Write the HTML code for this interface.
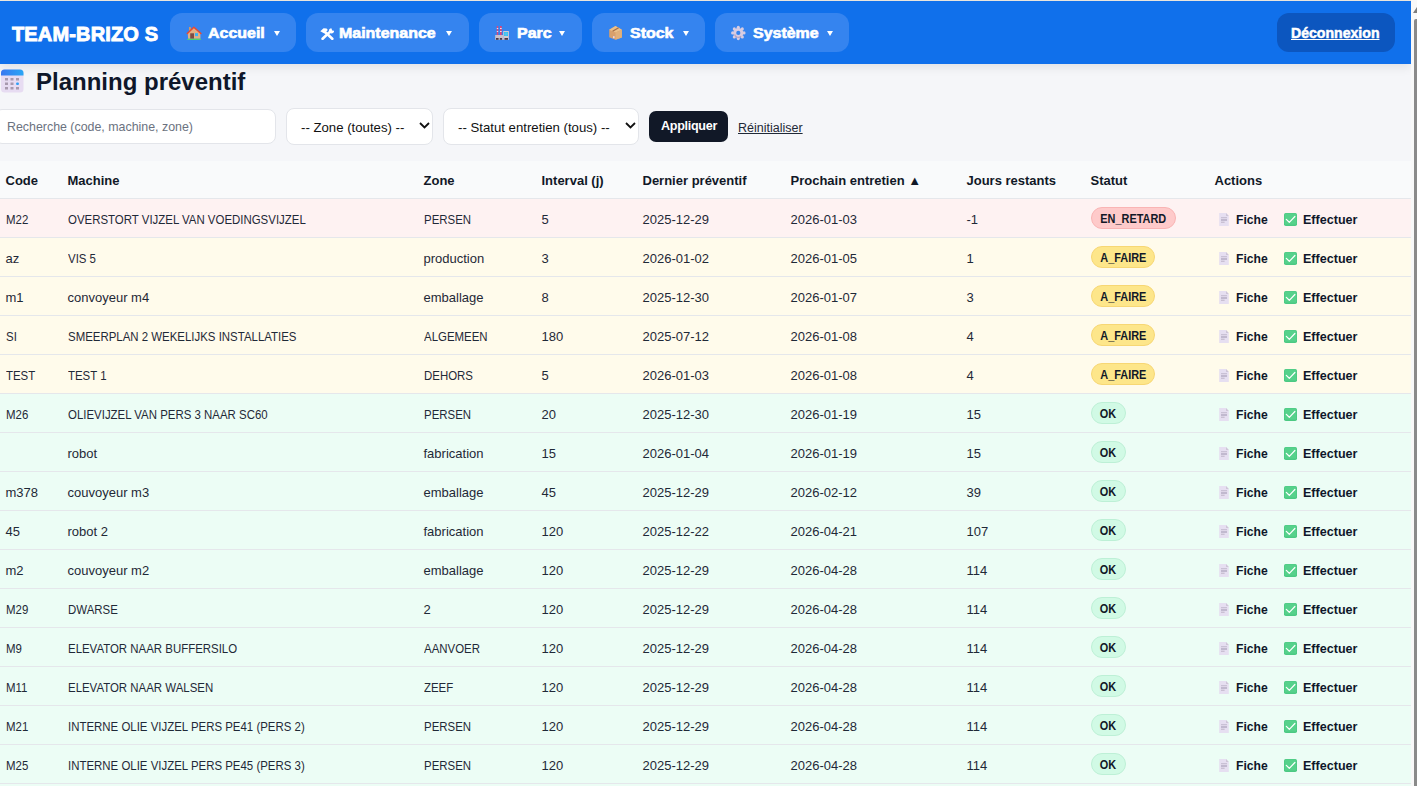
<!DOCTYPE html>
<html><head><meta charset="utf-8">
<style>
*{box-sizing:border-box;margin:0;padding:0}
html,body{width:1417px;height:786px;overflow:hidden}
body{background:#f5f6f9;font-family:"Liberation Sans",sans-serif;color:#111827;position:relative}
.abs{position:absolute}
.topline{position:absolute;left:0;top:0;width:1411px;height:1px;background:#eeeae2}
.nav{position:absolute;left:0;top:1px;width:1411px;height:63px;background:#1070eb;box-shadow:0 3px 10px rgba(0,0,0,.09)}
.brand{position:absolute;left:12px;top:24px;color:#fff;font-weight:bold;font-size:20px;line-height:20px;-webkit-text-stroke:0.9px #fff;letter-spacing:0.15px;white-space:nowrap}
.pill{position:absolute;top:13px;height:39px;border-radius:12px;background:#3584ef}
.ptxt{position:absolute;top:25px;line-height:16px;white-space:nowrap;color:#fff;font-weight:bold;font-size:14px;-webkit-text-stroke:0.6px #fff;letter-spacing:0px;transform:scaleX(1.14);transform-origin:0 0}
.car{position:absolute;top:31px;width:0;height:0;border-left:3px solid transparent;border-right:3px solid transparent;border-top:5px solid #fff}
.pico{position:absolute;top:26px}
.logout{position:absolute;left:1277px;top:13px;width:118px;height:39px;border-radius:12px;background:#0c56bf}
.logtxt{position:absolute;left:1291px;top:25px;line-height:16px;color:#fff;font-weight:bold;font-size:14.1px;text-decoration:underline;-webkit-text-stroke:0.5px #fff;white-space:nowrap}
.sb{position:absolute;left:1411px;top:0;width:6px;height:786px;background:#f8f8f8}
.sbthumb{position:absolute;left:1414px;top:19px;width:3px;height:768px;background:#8a8a8a;border-radius:2px 0 0 0}
.sbarrow{position:absolute;left:1413px;top:7px;width:0;height:0;border-left:4px solid transparent;border-right:4px solid transparent;border-bottom:6px solid #7d7d7d}
.h1{position:absolute;left:36px;top:68px;font-size:24px;line-height:28px;font-weight:bold;color:#0f172a;white-space:nowrap}
.cal{position:absolute;left:0;top:69px}
.search{position:absolute;left:-6px;top:109px;width:282px;height:35px;background:#fff;border:1px solid #e3e5ea;border-radius:8px}
.ph{position:absolute;left:7px;top:120px;font-size:12.4px;color:#6b7280;line-height:14px;white-space:nowrap}
.sel{position:absolute;top:108px;height:37px;background:#fff;border:1px solid #e3e5ea;border-radius:8px}
.seltxt{position:absolute;top:120px;line-height:15px;white-space:nowrap;font-size:13.2px;color:#111}
.chev{position:absolute;top:122px}
.btn{position:absolute;left:649px;top:111px;width:79px;height:31px;background:#111827;border-radius:7px}
.btntxt{position:absolute;left:661px;top:119px;line-height:15px;color:#fff;font-weight:bold;font-size:12.6px;letter-spacing:-0.3px;white-space:nowrap}
.reset{position:absolute;left:738px;top:121px;font-size:12.5px;line-height:15px;color:#1f2937;text-decoration:underline;white-space:nowrap}
table{position:absolute;left:0;top:161px;width:1411px;border-collapse:collapse;font-size:13px;table-layout:fixed}
th{height:37px;background:#f9fafb;text-align:left;font-weight:bold;padding:2px 0 0 5.5px;border-bottom:1px solid #e5e7eb;white-space:nowrap;color:#111827}
td{height:39px;padding:3px 0 0 5.5px;border-bottom:1px solid #e5e7eb;white-space:nowrap;color:#1f2937}
tr.r td{background:#fef2f2}
tr.y td{background:#fffbeb}
tr.g td{background:#ecfdf5}
.uc{display:inline-block;transform:scaleX(.88);transform-origin:0 0}
.badge{display:inline-block;height:22px;line-height:20px;border-radius:11px;font-size:12px;font-weight:bold;border:1px solid;color:#111827;vertical-align:middle;position:relative;top:-1px;margin-left:0.5px;text-align:center;white-space:nowrap}
.bt{display:inline-block;transform:scaleX(.91);transform-origin:50% 50%;position:relative;top:0.5px}
.b-r{width:84.5px}.b-y{width:64px}.b-g{width:34.5px}
.b-r{background:#fecaca;border-color:#f9b4b4}
.b-y{background:#fde68a;border-color:#f7d774}
.b-g{background:#d1fae5;border-color:#bdf0d6}
.act{padding:0}
.aw{position:relative;height:38px;font-weight:bold;font-size:13.5px;color:#0f172a}
.aw svg{position:absolute}
.aw .doc{left:10px;top:14px}
.aw .chk{left:75px;top:14px}
.aw .f,.aw .e{position:absolute;top:13.5px;line-height:16px;transform-origin:0 0;white-space:nowrap}
.aw .f{left:27.4px;transform:scaleX(.9)}
.aw .e{left:94px;transform:scaleX(.93)}

</style></head><body>
<div class="topline"></div>
<div class="nav"></div>
<div class="brand">TEAM-BRIZO S</div>

<div class="pill" style="left:170px;width:126px"></div>
<svg class="abs" style="left:184px;top:24px" width="20" height="18" viewBox="0 0 20 18"><rect x="5.1" y="3" width="1.7" height="4" fill="#dc9a5c"/><path d="M3.8 9.2L9.85 3.6L16.4 9.2V14.8H4.1z" fill="#e2b084"/><path d="M3.3 9.5L9.85 3.3L16.9 9.5" stroke="#e9482f" stroke-width="1.5" fill="none" stroke-linecap="round" stroke-linejoin="round"/><rect x="6.2" y="9.3" width="3.8" height="5.4" fill="#7d4c45"/><rect x="11" y="9.1" width="3" height="3" fill="#3bb4f4"/><rect x="3.2" y="14.7" width="13.8" height="1.3" rx="0.6" fill="#4fd36b"/></svg>
<div class="ptxt" style="left:208px">Accueil</div>
<div class="car" style="left:274px"></div>

<div class="pill" style="left:306px;width:163px"></div>
<svg class="abs" style="left:320px;top:28px" width="14" height="12" viewBox="0 0 14 12"><path d="M5 4L12.3 10.8" stroke="#fff" stroke-width="2.6" stroke-linecap="round"/><path d="M10.4 3.4L2.6 10.8" stroke="#fff" stroke-width="2.6" stroke-linecap="round"/><path d="M0.3 3.3L3.6 0.2L6.6 0.4L7.8 2.1L4.4 5.6z" fill="#fff"/><circle cx="11.5" cy="2.8" r="2.6" fill="#fff"/><path d="M11.3 -0.2L14.2 -0.2L14.2 2.9L12.2 2.6z" fill="#3584ef"/></svg>
<div class="ptxt" style="left:339px">Maintenance</div>
<div class="car" style="left:446px"></div>

<div class="pill" style="left:479px;width:103px"></div>
<svg class="abs" style="left:492px;top:24px" width="20" height="18" viewBox="0 0 20 18"><rect x="4.8" y="2" width="1.4" height="9" fill="#e0447a"/><rect x="8" y="2" width="1.7" height="9" fill="#e0447a"/><rect x="4.8" y="4" width="1.4" height="1" fill="#dfe3ea"/><rect x="8" y="4" width="1.7" height="1" fill="#dfe3ea"/><rect x="4.8" y="7" width="1.4" height="1" fill="#dfe3ea"/><rect x="8" y="7" width="1.7" height="1" fill="#dfe3ea"/><rect x="3.2" y="11" width="8" height="4.8" fill="#c9c0cb"/><rect x="11.2" y="7" width="5.7" height="8.8" fill="#d2cad3"/><rect x="12" y="8" width="4" height="4" fill="#35c0f0"/><path d="M14 8v4M12 10h4" stroke="#7fd4f4" stroke-width="0.4"/><rect x="4" y="14" width="2.6" height="1.8" fill="#4a3a48"/><rect x="7.8" y="14" width="2.3" height="1.8" fill="#4a3a48"/><rect x="12.5" y="14" width="3.5" height="1.8" fill="#4a3a48"/></svg>
<div class="ptxt" style="left:517px">Parc</div>
<div class="car" style="left:559px"></div>

<div class="pill" style="left:592px;width:113px"></div>
<svg class="abs" style="left:606px;top:24px" width="20" height="18" viewBox="0 0 20 18"><path d="M9.5 2L15.9 5.8V13.4L9.5 15.8L3.2 13.2V5.8z" fill="#d9a06c"/><path d="M3.2 5.8L9.5 2L15.9 5.8L9.5 8.4z" fill="#ebc08a"/><path d="M9.5 8.4L15.9 5.8V13.4L9.5 15.8z" fill="#e2b07a"/><path d="M6.6 7.2L12.6 3.8" stroke="#a46c46" stroke-width="1.3"/><rect x="7" y="12.2" width="1.6" height="2" fill="#e6d6ea"/></svg>
<div class="ptxt" style="left:630px">Stock</div>
<div class="car" style="left:683px"></div>

<div class="pill" style="left:715px;width:134px"></div>
<svg class="abs" style="left:728px;top:24px" width="20" height="18" viewBox="0 0 20 18"><g fill="#d8cce2"><circle cx="10.3" cy="8.9" r="5.0"/><circle cx="10.3" cy="3.2" r="1.55"/><circle cx="10.3" cy="14.6" r="1.55"/><circle cx="4.6" cy="8.9" r="1.55"/><circle cx="16.0" cy="8.9" r="1.55"/><circle cx="6.3" cy="4.9" r="1.55"/><circle cx="14.3" cy="4.9" r="1.55"/><circle cx="6.3" cy="12.9" r="1.55"/><circle cx="14.3" cy="12.9" r="1.55"/></g><path d="M6.6 10.5a3.8 3.8 0 0 0 6.5 1.6" stroke="#b6a4c2" stroke-width="1.2" fill="none"/><circle cx="10.3" cy="8.9" r="2.1" fill="#3584ef"/></svg>
<div class="ptxt" style="left:753px">Système</div>
<div class="car" style="left:827px"></div>

<div class="logout"></div>
<div class="logtxt">Déconnexion</div>

<svg class="cal" width="24" height="24" viewBox="0 0 24 24"><defs><linearGradient id="cg" x1="0" x2="1"><stop offset="0" stop-color="#3a78f0"/><stop offset="1" stop-color="#2aa6f5"/></linearGradient></defs><rect x="1" y="0.5" width="22.5" height="23" rx="3.5" fill="#e7dcf2"/><path d="M1 4a3.5 3.5 0 0 1 3.5-3.5h15.5a3.5 3.5 0 0 1 3.5 3.5v2.5h-22.5z" fill="url(#cg)"/><g fill="#a89aae"><rect x="5" y="9" width="3" height="2.5"/><rect x="10.5" y="9" width="3" height="2.5"/><rect x="16" y="9" width="3" height="2.5"/><rect x="5" y="13.5" width="3" height="2.5"/><rect x="10.5" y="13.5" width="3" height="2.5"/><rect x="5" y="18" width="3" height="2.5"/><rect x="10.5" y="18" width="3" height="2.5"/><rect x="16" y="18" width="3" height="2.5"/></g><rect x="16" y="13.5" width="3" height="2.5" rx="1.2" fill="#2f9ff5"/></svg>
<div class="h1">Planning préventif</div>

<div class="search"></div>
<div class="ph">Recherche (code, machine, zone)</div>
<div class="sel" style="left:286px;width:147px"></div>
<div class="seltxt" style="left:301px">-- Zone (toutes) --</div>
<svg class="chev" style="left:419px" width="11" height="7" viewBox="0 0 11 7"><path d="M1 1l4.5 4.5l4.5-4.5" stroke="#111" stroke-width="1.8" fill="none"/></svg>
<div class="sel" style="left:443px;width:196px"></div>
<div class="seltxt" style="left:458px">-- Statut entretien (tous) --</div>
<svg class="chev" style="left:625px" width="11" height="7" viewBox="0 0 11 7"><path d="M1 1l4.5 4.5l4.5-4.5" stroke="#111" stroke-width="1.8" fill="none"/></svg>
<div class="btn"></div>
<div class="btntxt">Appliquer</div>
<div class="reset">Réinitialiser</div>

<table>
<colgroup><col style="width:62px"><col style="width:356px"><col style="width:118px"><col style="width:101px"><col style="width:148px"><col style="width:176px"><col style="width:124px"><col style="width:124px"><col style="width:202px"></colgroup>
<thead><tr><th>Code</th><th>Machine</th><th>Zone</th><th>Interval (j)</th><th>Dernier préventif</th><th>Prochain entretien ▲</th><th>Jours restants</th><th>Statut</th><th>Actions</th></tr></thead>
<tbody>
<tr class="r"><td><span class="uc">M22</span></td><td><span class="uc">OVERSTORT VIJZEL VAN VOEDINGSVIJZEL</span></td><td><span class="uc">PERSEN</span></td><td>5</td><td>2025-12-29</td><td>2026-01-03</td><td>-1</td><td><span class="badge b-r"><span class="bt">EN_RETARD</span></span></td><td class="act"><div class="aw"><svg class="doc" width="10" height="13" viewBox="0 0 10 13"><path d="M0.2 0h6.8l2.8 3v10h-9.6z" fill="#e6dff1"/><path d="M7 0l2.8 3h-2.8z" fill="#cfc6d8"/><rect x="2" y="4.3" width="6" height="0.9" fill="#bdb4c9"/><rect x="2" y="6.2" width="6" height="1.6" fill="#b9b0c6"/><rect x="2" y="8.6" width="3.6" height="1.4" fill="#c9c0d3"/></svg><span class="f">Fiche</span><svg class="chk" width="13" height="13" viewBox="0 0 13 13"><rect x="0" y="0" width="13" height="13" rx="1.8" fill="#4cc983"/><rect x="0.8" y="0.6" width="11.4" height="11" rx="1.2" fill="#56d18b"/><path d="M2.3 6.4L5.3 9.3L10.9 3.5" stroke="#fff" stroke-width="1.2" fill="none" stroke-linecap="round" stroke-linejoin="round"/></svg><span class="e">Effectuer</span></div></td></tr><tr class="y"><td>az</td><td><span class="uc">VIS 5</span></td><td>production</td><td>3</td><td>2026-01-02</td><td>2026-01-05</td><td>1</td><td><span class="badge b-y"><span class="bt">A_FAIRE</span></span></td><td class="act"><div class="aw"><svg class="doc" width="10" height="13" viewBox="0 0 10 13"><path d="M0.2 0h6.8l2.8 3v10h-9.6z" fill="#e6dff1"/><path d="M7 0l2.8 3h-2.8z" fill="#cfc6d8"/><rect x="2" y="4.3" width="6" height="0.9" fill="#bdb4c9"/><rect x="2" y="6.2" width="6" height="1.6" fill="#b9b0c6"/><rect x="2" y="8.6" width="3.6" height="1.4" fill="#c9c0d3"/></svg><span class="f">Fiche</span><svg class="chk" width="13" height="13" viewBox="0 0 13 13"><rect x="0" y="0" width="13" height="13" rx="1.8" fill="#4cc983"/><rect x="0.8" y="0.6" width="11.4" height="11" rx="1.2" fill="#56d18b"/><path d="M2.3 6.4L5.3 9.3L10.9 3.5" stroke="#fff" stroke-width="1.2" fill="none" stroke-linecap="round" stroke-linejoin="round"/></svg><span class="e">Effectuer</span></div></td></tr><tr class="y"><td>m1</td><td>convoyeur m4</td><td>emballage</td><td>8</td><td>2025-12-30</td><td>2026-01-07</td><td>3</td><td><span class="badge b-y"><span class="bt">A_FAIRE</span></span></td><td class="act"><div class="aw"><svg class="doc" width="10" height="13" viewBox="0 0 10 13"><path d="M0.2 0h6.8l2.8 3v10h-9.6z" fill="#e6dff1"/><path d="M7 0l2.8 3h-2.8z" fill="#cfc6d8"/><rect x="2" y="4.3" width="6" height="0.9" fill="#bdb4c9"/><rect x="2" y="6.2" width="6" height="1.6" fill="#b9b0c6"/><rect x="2" y="8.6" width="3.6" height="1.4" fill="#c9c0d3"/></svg><span class="f">Fiche</span><svg class="chk" width="13" height="13" viewBox="0 0 13 13"><rect x="0" y="0" width="13" height="13" rx="1.8" fill="#4cc983"/><rect x="0.8" y="0.6" width="11.4" height="11" rx="1.2" fill="#56d18b"/><path d="M2.3 6.4L5.3 9.3L10.9 3.5" stroke="#fff" stroke-width="1.2" fill="none" stroke-linecap="round" stroke-linejoin="round"/></svg><span class="e">Effectuer</span></div></td></tr><tr class="y"><td><span class="uc">SI</span></td><td><span class="uc">SMEERPLAN 2 WEKELIJKS INSTALLATIES</span></td><td><span class="uc">ALGEMEEN</span></td><td>180</td><td>2025-07-12</td><td>2026-01-08</td><td>4</td><td><span class="badge b-y"><span class="bt">A_FAIRE</span></span></td><td class="act"><div class="aw"><svg class="doc" width="10" height="13" viewBox="0 0 10 13"><path d="M0.2 0h6.8l2.8 3v10h-9.6z" fill="#e6dff1"/><path d="M7 0l2.8 3h-2.8z" fill="#cfc6d8"/><rect x="2" y="4.3" width="6" height="0.9" fill="#bdb4c9"/><rect x="2" y="6.2" width="6" height="1.6" fill="#b9b0c6"/><rect x="2" y="8.6" width="3.6" height="1.4" fill="#c9c0d3"/></svg><span class="f">Fiche</span><svg class="chk" width="13" height="13" viewBox="0 0 13 13"><rect x="0" y="0" width="13" height="13" rx="1.8" fill="#4cc983"/><rect x="0.8" y="0.6" width="11.4" height="11" rx="1.2" fill="#56d18b"/><path d="M2.3 6.4L5.3 9.3L10.9 3.5" stroke="#fff" stroke-width="1.2" fill="none" stroke-linecap="round" stroke-linejoin="round"/></svg><span class="e">Effectuer</span></div></td></tr><tr class="y"><td><span class="uc">TEST</span></td><td><span class="uc">TEST 1</span></td><td><span class="uc">DEHORS</span></td><td>5</td><td>2026-01-03</td><td>2026-01-08</td><td>4</td><td><span class="badge b-y"><span class="bt">A_FAIRE</span></span></td><td class="act"><div class="aw"><svg class="doc" width="10" height="13" viewBox="0 0 10 13"><path d="M0.2 0h6.8l2.8 3v10h-9.6z" fill="#e6dff1"/><path d="M7 0l2.8 3h-2.8z" fill="#cfc6d8"/><rect x="2" y="4.3" width="6" height="0.9" fill="#bdb4c9"/><rect x="2" y="6.2" width="6" height="1.6" fill="#b9b0c6"/><rect x="2" y="8.6" width="3.6" height="1.4" fill="#c9c0d3"/></svg><span class="f">Fiche</span><svg class="chk" width="13" height="13" viewBox="0 0 13 13"><rect x="0" y="0" width="13" height="13" rx="1.8" fill="#4cc983"/><rect x="0.8" y="0.6" width="11.4" height="11" rx="1.2" fill="#56d18b"/><path d="M2.3 6.4L5.3 9.3L10.9 3.5" stroke="#fff" stroke-width="1.2" fill="none" stroke-linecap="round" stroke-linejoin="round"/></svg><span class="e">Effectuer</span></div></td></tr><tr class="g"><td><span class="uc">M26</span></td><td><span class="uc">OLIEVIJZEL VAN PERS 3 NAAR SC60</span></td><td><span class="uc">PERSEN</span></td><td>20</td><td>2025-12-30</td><td>2026-01-19</td><td>15</td><td><span class="badge b-g"><span class="bt">OK</span></span></td><td class="act"><div class="aw"><svg class="doc" width="10" height="13" viewBox="0 0 10 13"><path d="M0.2 0h6.8l2.8 3v10h-9.6z" fill="#e6dff1"/><path d="M7 0l2.8 3h-2.8z" fill="#cfc6d8"/><rect x="2" y="4.3" width="6" height="0.9" fill="#bdb4c9"/><rect x="2" y="6.2" width="6" height="1.6" fill="#b9b0c6"/><rect x="2" y="8.6" width="3.6" height="1.4" fill="#c9c0d3"/></svg><span class="f">Fiche</span><svg class="chk" width="13" height="13" viewBox="0 0 13 13"><rect x="0" y="0" width="13" height="13" rx="1.8" fill="#4cc983"/><rect x="0.8" y="0.6" width="11.4" height="11" rx="1.2" fill="#56d18b"/><path d="M2.3 6.4L5.3 9.3L10.9 3.5" stroke="#fff" stroke-width="1.2" fill="none" stroke-linecap="round" stroke-linejoin="round"/></svg><span class="e">Effectuer</span></div></td></tr><tr class="g"><td></td><td>robot</td><td>fabrication</td><td>15</td><td>2026-01-04</td><td>2026-01-19</td><td>15</td><td><span class="badge b-g"><span class="bt">OK</span></span></td><td class="act"><div class="aw"><svg class="doc" width="10" height="13" viewBox="0 0 10 13"><path d="M0.2 0h6.8l2.8 3v10h-9.6z" fill="#e6dff1"/><path d="M7 0l2.8 3h-2.8z" fill="#cfc6d8"/><rect x="2" y="4.3" width="6" height="0.9" fill="#bdb4c9"/><rect x="2" y="6.2" width="6" height="1.6" fill="#b9b0c6"/><rect x="2" y="8.6" width="3.6" height="1.4" fill="#c9c0d3"/></svg><span class="f">Fiche</span><svg class="chk" width="13" height="13" viewBox="0 0 13 13"><rect x="0" y="0" width="13" height="13" rx="1.8" fill="#4cc983"/><rect x="0.8" y="0.6" width="11.4" height="11" rx="1.2" fill="#56d18b"/><path d="M2.3 6.4L5.3 9.3L10.9 3.5" stroke="#fff" stroke-width="1.2" fill="none" stroke-linecap="round" stroke-linejoin="round"/></svg><span class="e">Effectuer</span></div></td></tr><tr class="g"><td>m378</td><td>couvoyeur m3</td><td>emballage</td><td>45</td><td>2025-12-29</td><td>2026-02-12</td><td>39</td><td><span class="badge b-g"><span class="bt">OK</span></span></td><td class="act"><div class="aw"><svg class="doc" width="10" height="13" viewBox="0 0 10 13"><path d="M0.2 0h6.8l2.8 3v10h-9.6z" fill="#e6dff1"/><path d="M7 0l2.8 3h-2.8z" fill="#cfc6d8"/><rect x="2" y="4.3" width="6" height="0.9" fill="#bdb4c9"/><rect x="2" y="6.2" width="6" height="1.6" fill="#b9b0c6"/><rect x="2" y="8.6" width="3.6" height="1.4" fill="#c9c0d3"/></svg><span class="f">Fiche</span><svg class="chk" width="13" height="13" viewBox="0 0 13 13"><rect x="0" y="0" width="13" height="13" rx="1.8" fill="#4cc983"/><rect x="0.8" y="0.6" width="11.4" height="11" rx="1.2" fill="#56d18b"/><path d="M2.3 6.4L5.3 9.3L10.9 3.5" stroke="#fff" stroke-width="1.2" fill="none" stroke-linecap="round" stroke-linejoin="round"/></svg><span class="e">Effectuer</span></div></td></tr><tr class="g"><td>45</td><td>robot 2</td><td>fabrication</td><td>120</td><td>2025-12-22</td><td>2026-04-21</td><td>107</td><td><span class="badge b-g"><span class="bt">OK</span></span></td><td class="act"><div class="aw"><svg class="doc" width="10" height="13" viewBox="0 0 10 13"><path d="M0.2 0h6.8l2.8 3v10h-9.6z" fill="#e6dff1"/><path d="M7 0l2.8 3h-2.8z" fill="#cfc6d8"/><rect x="2" y="4.3" width="6" height="0.9" fill="#bdb4c9"/><rect x="2" y="6.2" width="6" height="1.6" fill="#b9b0c6"/><rect x="2" y="8.6" width="3.6" height="1.4" fill="#c9c0d3"/></svg><span class="f">Fiche</span><svg class="chk" width="13" height="13" viewBox="0 0 13 13"><rect x="0" y="0" width="13" height="13" rx="1.8" fill="#4cc983"/><rect x="0.8" y="0.6" width="11.4" height="11" rx="1.2" fill="#56d18b"/><path d="M2.3 6.4L5.3 9.3L10.9 3.5" stroke="#fff" stroke-width="1.2" fill="none" stroke-linecap="round" stroke-linejoin="round"/></svg><span class="e">Effectuer</span></div></td></tr><tr class="g"><td>m2</td><td>couvoyeur m2</td><td>emballage</td><td>120</td><td>2025-12-29</td><td>2026-04-28</td><td>114</td><td><span class="badge b-g"><span class="bt">OK</span></span></td><td class="act"><div class="aw"><svg class="doc" width="10" height="13" viewBox="0 0 10 13"><path d="M0.2 0h6.8l2.8 3v10h-9.6z" fill="#e6dff1"/><path d="M7 0l2.8 3h-2.8z" fill="#cfc6d8"/><rect x="2" y="4.3" width="6" height="0.9" fill="#bdb4c9"/><rect x="2" y="6.2" width="6" height="1.6" fill="#b9b0c6"/><rect x="2" y="8.6" width="3.6" height="1.4" fill="#c9c0d3"/></svg><span class="f">Fiche</span><svg class="chk" width="13" height="13" viewBox="0 0 13 13"><rect x="0" y="0" width="13" height="13" rx="1.8" fill="#4cc983"/><rect x="0.8" y="0.6" width="11.4" height="11" rx="1.2" fill="#56d18b"/><path d="M2.3 6.4L5.3 9.3L10.9 3.5" stroke="#fff" stroke-width="1.2" fill="none" stroke-linecap="round" stroke-linejoin="round"/></svg><span class="e">Effectuer</span></div></td></tr><tr class="g"><td><span class="uc">M29</span></td><td><span class="uc">DWARSE</span></td><td>2</td><td>120</td><td>2025-12-29</td><td>2026-04-28</td><td>114</td><td><span class="badge b-g"><span class="bt">OK</span></span></td><td class="act"><div class="aw"><svg class="doc" width="10" height="13" viewBox="0 0 10 13"><path d="M0.2 0h6.8l2.8 3v10h-9.6z" fill="#e6dff1"/><path d="M7 0l2.8 3h-2.8z" fill="#cfc6d8"/><rect x="2" y="4.3" width="6" height="0.9" fill="#bdb4c9"/><rect x="2" y="6.2" width="6" height="1.6" fill="#b9b0c6"/><rect x="2" y="8.6" width="3.6" height="1.4" fill="#c9c0d3"/></svg><span class="f">Fiche</span><svg class="chk" width="13" height="13" viewBox="0 0 13 13"><rect x="0" y="0" width="13" height="13" rx="1.8" fill="#4cc983"/><rect x="0.8" y="0.6" width="11.4" height="11" rx="1.2" fill="#56d18b"/><path d="M2.3 6.4L5.3 9.3L10.9 3.5" stroke="#fff" stroke-width="1.2" fill="none" stroke-linecap="round" stroke-linejoin="round"/></svg><span class="e">Effectuer</span></div></td></tr><tr class="g"><td><span class="uc">M9</span></td><td><span class="uc">ELEVATOR NAAR BUFFERSILO</span></td><td><span class="uc">AANVOER</span></td><td>120</td><td>2025-12-29</td><td>2026-04-28</td><td>114</td><td><span class="badge b-g"><span class="bt">OK</span></span></td><td class="act"><div class="aw"><svg class="doc" width="10" height="13" viewBox="0 0 10 13"><path d="M0.2 0h6.8l2.8 3v10h-9.6z" fill="#e6dff1"/><path d="M7 0l2.8 3h-2.8z" fill="#cfc6d8"/><rect x="2" y="4.3" width="6" height="0.9" fill="#bdb4c9"/><rect x="2" y="6.2" width="6" height="1.6" fill="#b9b0c6"/><rect x="2" y="8.6" width="3.6" height="1.4" fill="#c9c0d3"/></svg><span class="f">Fiche</span><svg class="chk" width="13" height="13" viewBox="0 0 13 13"><rect x="0" y="0" width="13" height="13" rx="1.8" fill="#4cc983"/><rect x="0.8" y="0.6" width="11.4" height="11" rx="1.2" fill="#56d18b"/><path d="M2.3 6.4L5.3 9.3L10.9 3.5" stroke="#fff" stroke-width="1.2" fill="none" stroke-linecap="round" stroke-linejoin="round"/></svg><span class="e">Effectuer</span></div></td></tr><tr class="g"><td><span class="uc">M11</span></td><td><span class="uc">ELEVATOR NAAR WALSEN</span></td><td><span class="uc">ZEEF</span></td><td>120</td><td>2025-12-29</td><td>2026-04-28</td><td>114</td><td><span class="badge b-g"><span class="bt">OK</span></span></td><td class="act"><div class="aw"><svg class="doc" width="10" height="13" viewBox="0 0 10 13"><path d="M0.2 0h6.8l2.8 3v10h-9.6z" fill="#e6dff1"/><path d="M7 0l2.8 3h-2.8z" fill="#cfc6d8"/><rect x="2" y="4.3" width="6" height="0.9" fill="#bdb4c9"/><rect x="2" y="6.2" width="6" height="1.6" fill="#b9b0c6"/><rect x="2" y="8.6" width="3.6" height="1.4" fill="#c9c0d3"/></svg><span class="f">Fiche</span><svg class="chk" width="13" height="13" viewBox="0 0 13 13"><rect x="0" y="0" width="13" height="13" rx="1.8" fill="#4cc983"/><rect x="0.8" y="0.6" width="11.4" height="11" rx="1.2" fill="#56d18b"/><path d="M2.3 6.4L5.3 9.3L10.9 3.5" stroke="#fff" stroke-width="1.2" fill="none" stroke-linecap="round" stroke-linejoin="round"/></svg><span class="e">Effectuer</span></div></td></tr><tr class="g"><td><span class="uc">M21</span></td><td><span class="uc">INTERNE OLIE VIJZEL PERS PE41 (PERS 2)</span></td><td><span class="uc">PERSEN</span></td><td>120</td><td>2025-12-29</td><td>2026-04-28</td><td>114</td><td><span class="badge b-g"><span class="bt">OK</span></span></td><td class="act"><div class="aw"><svg class="doc" width="10" height="13" viewBox="0 0 10 13"><path d="M0.2 0h6.8l2.8 3v10h-9.6z" fill="#e6dff1"/><path d="M7 0l2.8 3h-2.8z" fill="#cfc6d8"/><rect x="2" y="4.3" width="6" height="0.9" fill="#bdb4c9"/><rect x="2" y="6.2" width="6" height="1.6" fill="#b9b0c6"/><rect x="2" y="8.6" width="3.6" height="1.4" fill="#c9c0d3"/></svg><span class="f">Fiche</span><svg class="chk" width="13" height="13" viewBox="0 0 13 13"><rect x="0" y="0" width="13" height="13" rx="1.8" fill="#4cc983"/><rect x="0.8" y="0.6" width="11.4" height="11" rx="1.2" fill="#56d18b"/><path d="M2.3 6.4L5.3 9.3L10.9 3.5" stroke="#fff" stroke-width="1.2" fill="none" stroke-linecap="round" stroke-linejoin="round"/></svg><span class="e">Effectuer</span></div></td></tr><tr class="g"><td><span class="uc">M25</span></td><td><span class="uc">INTERNE OLIE VIJZEL PERS PE45 (PERS 3)</span></td><td><span class="uc">PERSEN</span></td><td>120</td><td>2025-12-29</td><td>2026-04-28</td><td>114</td><td><span class="badge b-g"><span class="bt">OK</span></span></td><td class="act"><div class="aw"><svg class="doc" width="10" height="13" viewBox="0 0 10 13"><path d="M0.2 0h6.8l2.8 3v10h-9.6z" fill="#e6dff1"/><path d="M7 0l2.8 3h-2.8z" fill="#cfc6d8"/><rect x="2" y="4.3" width="6" height="0.9" fill="#bdb4c9"/><rect x="2" y="6.2" width="6" height="1.6" fill="#b9b0c6"/><rect x="2" y="8.6" width="3.6" height="1.4" fill="#c9c0d3"/></svg><span class="f">Fiche</span><svg class="chk" width="13" height="13" viewBox="0 0 13 13"><rect x="0" y="0" width="13" height="13" rx="1.8" fill="#4cc983"/><rect x="0.8" y="0.6" width="11.4" height="11" rx="1.2" fill="#56d18b"/><path d="M2.3 6.4L5.3 9.3L10.9 3.5" stroke="#fff" stroke-width="1.2" fill="none" stroke-linecap="round" stroke-linejoin="round"/></svg><span class="e">Effectuer</span></div></td></tr><tr class="g"><td></td><td></td><td></td><td></td><td></td><td></td><td></td><td></td><td></td></tr>
</tbody></table>
<div class="sb"></div><div class="sbarrow"></div><div class="sbthumb"></div>
</body></html>
